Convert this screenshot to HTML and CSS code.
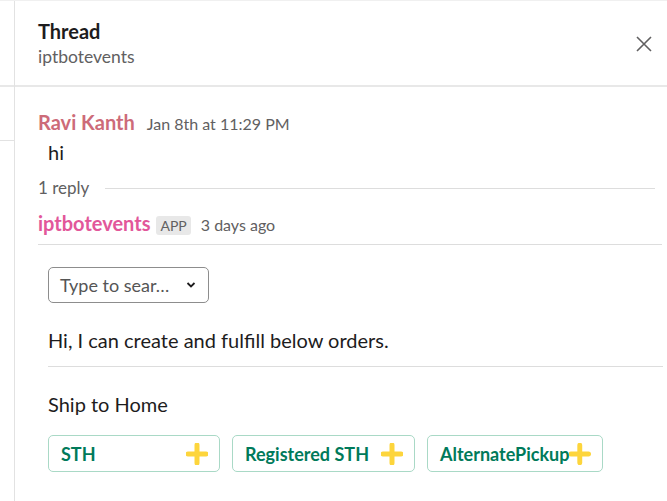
FILE: index.html
```html
<!DOCTYPE html>
<html lang="en">
<head>
    <meta charset="UTF-8">
    <title>Thread</title>
    <link rel="stylesheet" href="styles.css">
</head>
<body>

<div class="side">
    <div class="side-top"></div>
    <div class="side-row"></div>
</div>

<div class="thread">
    <div class="thread-head">
        <div>
            <div class="thread-title">Thread</div>
            <div class="thread-channel">iptbotevents</div>
        </div>
        <svg class="close" width="18" height="18" viewBox="0 0 18 18">
            <path d="M2 2 L16 16 M16 2 L2 16" stroke="#616061" stroke-width="1.6" fill="none"/>
        </svg>
    </div>

    <div class="message">
        <div class="meta">
            <span class="name name-user">Ravi Kanth</span>
            <span class="time">Jan 8th at 11:29 PM</span>
        </div>
        <div class="body-text body-hi">hi</div>
    </div>

    <div class="replies">
        <span>1 reply</span>
        <div class="replies-line"></div>
    </div>

    <div class="message bot">
        <div class="meta">
            <span class="name name-bot">iptbotevents</span>
            <span class="badge">APP</span>
            <span class="time">3 days ago</span>
        </div>
        <div class="block">
            <div class="select">
                <span>Type to sear…</span>
                <svg width="10" height="8" viewBox="0 0 10 8">
                    <path d="M1.5 2 L5 5.5 L8.5 2" stroke="#1d1c1d" stroke-width="1.8" fill="none"/>
                </svg>
            </div>
            <div class="intro">Hi, I can create and fulfill below orders.</div>
            <div class="section-title">Ship to Home</div>
            <div class="actions">
                <div class="btn btn-sth">STH <svg class="plus" viewBox="0 0 22 22"><path d="M11 2 V20 M2 11 H20" stroke="#fdd53c" stroke-width="5" stroke-linecap="round"/></svg></div>
                <div class="btn btn-reg">Registered STH <svg class="plus" viewBox="0 0 22 22"><path d="M11 2 V20 M2 11 H20" stroke="#fdd53c" stroke-width="5" stroke-linecap="round"/></svg></div>
                <div class="btn btn-alt">AlternatePickup <svg class="plus" viewBox="0 0 22 22"><path d="M11 2 V20 M2 11 H20" stroke="#fdd53c" stroke-width="5" stroke-linecap="round"/></svg></div>
            </div>
            <div class="section-title section-last">In-store Pickup</div>
        </div>
    </div>
</div>

</body>
</html>
```

FILE: styles.css
```css
body {
    margin: 0;
    display: flex;
    height: 501px;
    overflow: hidden;
    font-family: Lato, "Noto Sans", sans-serif;
    color: #1d1c1d;
    background: #fff;
    border-top: 1px solid #f0f0f0;
    box-sizing: border-box;
}

.side {
    width: 14px;
    border-right: 1px solid #e2e2e2;
    flex-shrink: 0;
}

.side-top {
    height: 84px;
    border-bottom: 2px solid #e8e8e8;
}

.side-row {
    height: 53px;
    border-bottom: 1px solid #e2e2e2;
}

.thread {
    flex: 1;
    min-width: 0;
}

.thread-head {
    height: 86px;
    box-sizing: border-box;
    border-bottom: 2px solid #e8e8e8;
    padding: 18px 14px 0 23px;
    display: flex;
    justify-content: space-between;
    align-items: flex-start;
}

.thread-title {
    font-size: 20px;
    font-weight: bold;
    line-height: 24px;
}

.thread-channel {
    font-size: 17.5px;
    color: #616061;
    line-height: 28px;
}

.close {
    margin-top: 16px;
}

.message {
    padding: 22px 0 0 23px;
}

.meta {
    display: flex;
    align-items: baseline;
    gap: 12px;
    line-height: 26px;
}

.name {
    font-size: 20px;
    font-weight: bold;
}

.name-user {
    color: #cd6b79;
}

.name-bot {
    color: #e2579a;
}

.time {
    font-size: 16px;
    color: #616061;
}

.badge {
    font-size: 14px;
    color: #616061;
    background: #e8e8e8;
    border-radius: 3px;
    padding: 0 4px;
    line-height: 19px;
    margin-left: -6px;
    margin-right: -2px;
}

.body-text {
    font-size: 20px;
    line-height: 30px;
}

.body-hi {
    padding-left: 10px;
}

.replies {
    display: flex;
    align-items: center;
    gap: 16px;
    padding: 9px 12px 0 23px;
    font-size: 17px;
    color: #616061;
    line-height: 24px;
}

.replies-line {
    flex: 1;
    height: 1px;
    background: #dddddd;
}

.message.bot {
    padding-top: 10px;
}

.block {
    margin-right: 5px;
    border-top: 1px solid #dddddd;
    margin-top: 6px;
    padding: 22px 0 0 10px;
}

.select {
    width: 161px;
    height: 36px;
    box-sizing: border-box;
    border: 1px solid #8d8d8d;
    border-radius: 5px;
    display: flex;
    align-items: center;
    justify-content: space-between;
    padding: 0 12px 0 11px;
    font-size: 18px;
    color: #555;
}

.intro {
    font-size: 20px;
    line-height: 28px;
    padding: 23px 0 12px;
    border-bottom: 1px solid #dddddd;
    margin-right: -1px;
}

.section-title {
    font-size: 20px;
    padding-top: 23px;
    line-height: 28px;
}

.section-last {
    padding-top: 24px;
}

.actions {
    display: flex;
    gap: 12px;
    margin-top: 17px;
}

.btn {
    height: 37px;
    box-sizing: border-box;
    border: 1px solid #a9d9c6;
    border-radius: 5px;
    display: flex;
    align-items: center;
    justify-content: space-between;
    padding: 0 11px 0 12px;
    font-size: 18px;
    font-weight: bold;
    color: #007a5a;
}

.btn-sth {
    width: 172px;
}

.btn-reg {
    width: 183px;
}

.btn-alt {
    width: 176px;
}

.plus {
    width: 22px;
    height: 22px;
}
```
